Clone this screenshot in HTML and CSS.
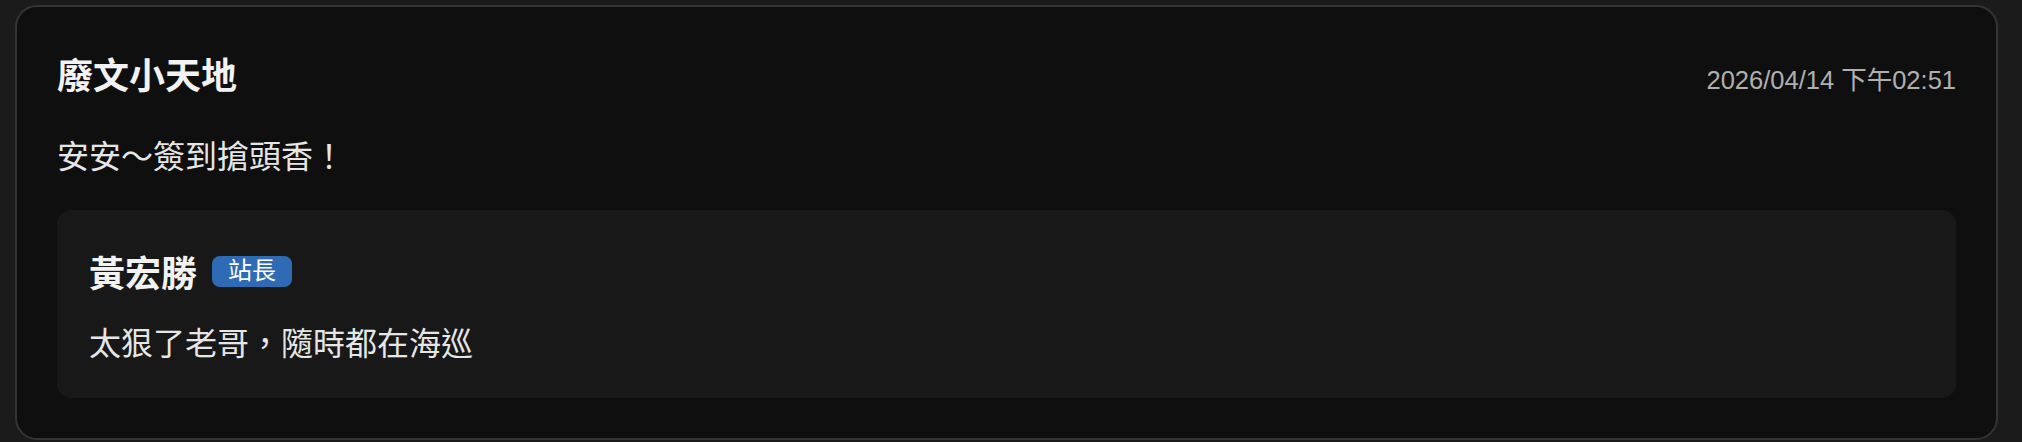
FILE: index.html
```html
<!DOCTYPE html>
<html lang="zh-Hant">
<head>
    <meta charset="UTF-8">
    <meta name="viewport" content="width=device-width, initial-scale=1.0">
    <title>廢文小天地</title>
    <link rel="stylesheet" href="styles.css">
</head>
<body>
    <div class="post">
        <div class="post-header">
            <h2 class="post-title">廢文小天地</h2>
            <span class="post-date">2026/04/14 下午02:51</span>
        </div>
        <p class="post-body">安安～簽到搶頭香！</p>

        <div class="reply">
            <div class="reply-header">
                <span class="reply-name">黃宏勝</span>
                <span class="badge">站長</span>
            </div>
            <p class="reply-body">太狠了老哥，隨時都在海巡</p>
        </div>
    </div>
</body>
</html>
```

FILE: styles.css
```css
body {
    margin: 0;
    padding: 5px 24px 0 15px;
    background-color: #1b1b1b;
    font-family: "Liberation Sans", "Noto Sans CJK TC", sans-serif;
    color: #ececec;
}
.post {
    background: #0f0f0f;
    border: 2px solid #343434;
    border-radius: 22px;
    padding: 43px 40px 40px;
}
.post-header {
    display: flex;
    justify-content: space-between;
    align-items: center;
    height: 54px;
    margin-bottom: 29px;
}
.post-title {
    margin: 0;
    font-size: 36px;
    font-weight: bold;
    line-height: 54px;
    color: #f2f2f2;
}
.post-date {
    font-size: 25.5px;
    color: #b0b0b0;
}
.post-body {
    margin: 0 0 29px;
    font-size: 32px;
    line-height: 48px;
    color: #e6e6e6;
}
.reply {
    background: #181818;
    border-radius: 14px;
    padding: 34px 32px 30px;
}
.reply-header {
    display: flex;
    align-items: center;
    height: 54px;
    margin-bottom: 22px;
}
.reply-name {
    font-size: 36px;
    font-weight: bold;
    color: #f2f2f2;
}
.badge {
    margin-left: 15px;
    padding: 1px 16px 2px;
    font-size: 24px;
    line-height: 28px;
    color: #fff;
    background-color: #2e6bb4;
    border-radius: 8px;
}
.reply-body {
    margin: 0;
    font-size: 32px;
    line-height: 48px;
    color: #e6e6e6;
}
```
